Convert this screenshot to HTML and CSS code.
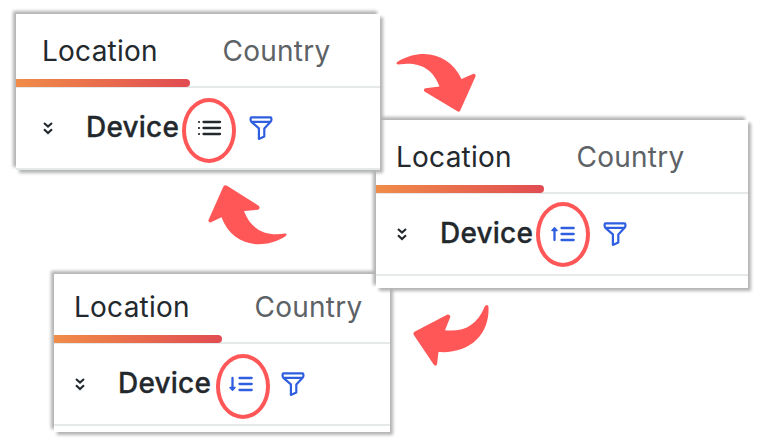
FILE: index.html
```
<!DOCTYPE html>
<html lang="en">
<head>
<meta charset="utf-8">
<title>Sort order cycle</title>
<link rel="stylesheet" href="styles.css">
</head>
<body>
<svg class="defs" width="0" height="0">
  <symbol id="chevrons" viewBox="0 0 12 14"><path d="M2 2l4 3.600L10 2M2 8.200l4 3.800 4-3.800" fill="none" stroke="currentColor" stroke-width="2.100"/></symbol>
  <symbol id="filter" viewBox="0 0 26 26"><path d="M2.600 3.400q0-1 1-1h18.800q1 0 1 1v1.400q0 1.200-.8 2l-6.300 6.600v8.100l-5.400 2.400V13.400L3.400 6.800q-.8-.8-.8-2zM3 6.800h20" fill="none" stroke="currentColor" stroke-width="2.200" stroke-linejoin="round"/></symbol>
  <symbol id="list" viewBox="0 0 26 18"><path d="M7.500 3h16.500M7.500 9h16.500M7.500 15h16.500" stroke="currentColor" stroke-width="2.300" stroke-linecap="round"/><path d="M3 3h.01M3 9h.01M3 15h.01" stroke="currentColor" stroke-width="2.200" stroke-linecap="round"/></symbol>
  <symbol id="asc" viewBox="0 0 26 18"><path d="M11.500 3H23.700M11.500 9H23.700M11.500 15H23.700" stroke="currentColor" stroke-width="2.300" stroke-linecap="round"/><path d="M4.500 15V4" stroke="currentColor" stroke-width="2.300" stroke-linecap="round"/><path d="M2 5.500L4.500 2.800 7 5.500z" fill="currentColor" stroke="currentColor" stroke-width="1.500" stroke-linejoin="round"/></symbol>
  <symbol id="desc" viewBox="0 0 26 18"><path d="M11.500 3H23.700M11.500 9H23.700M11.500 15H23.700" stroke="currentColor" stroke-width="2.300" stroke-linecap="round"/><path d="M4.500 3V14" stroke="currentColor" stroke-width="2.300" stroke-linecap="round"/><path d="M2 12.500L4.500 15.200 7 12.500z" fill="currentColor" stroke="currentColor" stroke-width="1.500" stroke-linejoin="round"/></symbol>
</svg>
<main class="canvas">
  <section class="panel panel-desc">
    <div class="tabs"><div class="tab active">Location</div><div class="tab">Country</div></div>
    <div class="row"><svg class="chevrons"><use href="#chevrons"/></svg><span class="name">Device</span><span class="sort blue"><svg><use href="#desc"/></svg></span><svg class="filter"><use href="#filter"/></svg></div>
  </section>
  <section class="panel panel-asc">
    <div class="tabs"><div class="tab active">Location</div><div class="tab">Country</div></div>
    <div class="row"><svg class="chevrons"><use href="#chevrons"/></svg><span class="name">Device</span><span class="sort blue"><svg><use href="#asc"/></svg></span><svg class="filter"><use href="#filter"/></svg></div>
  </section>
  <section class="panel panel-none">
    <div class="tabs"><div class="tab active">Location</div><div class="tab">Country</div></div>
    <div class="row"><svg class="chevrons"><use href="#chevrons"/></svg><span class="name">Device</span><span class="sort"><svg><use href="#list"/></svg></span><svg class="filter"><use href="#filter"/></svg></div>
  </section>
  <svg class="arrows" viewBox="0 0 764 447">
    <path d="M397.500 61.700C424 46.500 450 55 461.500 79L473.500 73.700Q476 73.700 475.500 76.500L460 111Q459 112.500 457 111L424.500 91.500Q423 89 425.500 88.200L439.500 86.500C432 66 416 61.500 398.500 64.500Q395 64 397.500 61.700Z"/>
    <path d="M285.500 236.300C260 252 231 244 221.500 217.300L210.500 222.500Q208 222.500 208.500 220L223.500 186.300Q225 184.700 227 185.800L259 206Q260.500 208.500 258 209.700L244 211C251 230 266 236.500 285 233.500Q288 233.700 285.500 236.300Z"/>
    <path d="M488.500 306.500C490 336 468 354 438.500 352L437 364.500Q436 366.500 434 365L413.500 334.500Q413 332.500 414.500 331.800L447.500 314.500Q450.500 314.500 450.300 317L445 330.300C465 332 477 325 484.500 307Q486.500 303.500 488.500 306.500Z"/>
  </svg>
</main>
</body>
</html>
```
FILE: styles.css
```
body {
  margin: 0;
  background: #fff;
  font-family: Inter, "Liberation Sans", sans-serif;
}

.defs {
  position: absolute;
}

.canvas {
  position: relative;
  width: 764px;
  height: 447px;
  overflow: hidden;
}

.panel {
  position: absolute;
  box-sizing: border-box;
  background: #fff;
  overflow: hidden;
  box-shadow: -3px -3px 3px #b4b4b4, 3px 3px 3px #b4b4b4;
}

.panel-none {
  left: 16px;
  top: 14px;
  width: 364px;
  height: 156px;
  --inset: 27px;
}

.panel-asc {
  left: 376px;
  top: 120px;
  width: 372px;
  height: 168px;
  --inset: 21px;
}

.panel-desc {
  left: 54px;
  top: 274px;
  width: 336px;
  height: 158px;
  --inset: 21px;
}

.tabs {
  box-sizing: border-box;
  display: flex;
  height: 74px;
  border-bottom: 2px solid #e6e9ea;
}

.panel-desc .tabs {
  height: 70px;
}

.tab {
  box-sizing: border-box;
  display: flex;
  flex-direction: column;
  justify-content: space-between;
  height: 72.500px;
  padding: 18.500px 0 0 32.500px;
  font-size: 28px;
  line-height: 36px;
  letter-spacing: 0.250px;
  color: #5d6266;
}

.tab.active {
  width: calc(var(--inset) + 147px);
  padding-left: calc(var(--inset) - 1px);
  color: #23282d;
}

.tab.active::after {
  content: "";
  height: 8px;
  margin-left: calc(1px - var(--inset));
  background: linear-gradient(90deg, #f08c48, #e14c52);
  border-radius: 0 4px 4px 0;
}

.panel-desc .tab {
  height: 68.500px;
  padding-top: 14.500px;
}

.row {
  box-sizing: border-box;
  display: flex;
  align-items: center;
  height: 82px;
  padding-left: calc(var(--inset) - 1px);
  border-bottom: 2px solid #e6e9ea;
  color: #23282d;
}

.chevrons {
  width: 12px;
  height: 14px;
}

.name {
  box-sizing: content-box;
  width: 110px;
  padding-left: 32px;
  margin-top: -2px;
  font-size: 28px;
  line-height: 36px;
  font-weight: 500;
  letter-spacing: 0.200px;
  -webkit-text-stroke: 0.300px currentColor;
}

.sort {
  position: relative;
  width: 26px;
  height: 18px;
}

.sort svg {
  display: block;
  width: 26px;
  height: 18px;
}

.sort::after {
  content: "";
  position: absolute;
  box-sizing: border-box;
  left: -14px;
  top: -21px;
  width: 54px;
  height: 64.500px;
  border: 4px solid #ff5757;
  border-radius: 50%;
}

.panel-asc .sort::after {
  top: -23px;
}

.panel-desc .sort::after {
  left: -12px;
}

.blue,
.filter {
  color: #2f5fe0;
}

.filter {
  width: 26px;
  height: 26px;
  margin-left: 26px;
}

.arrows {
  position: absolute;
  inset: 0;
  width: 764px;
  height: 447px;
  fill: #ff5757;
}
```
